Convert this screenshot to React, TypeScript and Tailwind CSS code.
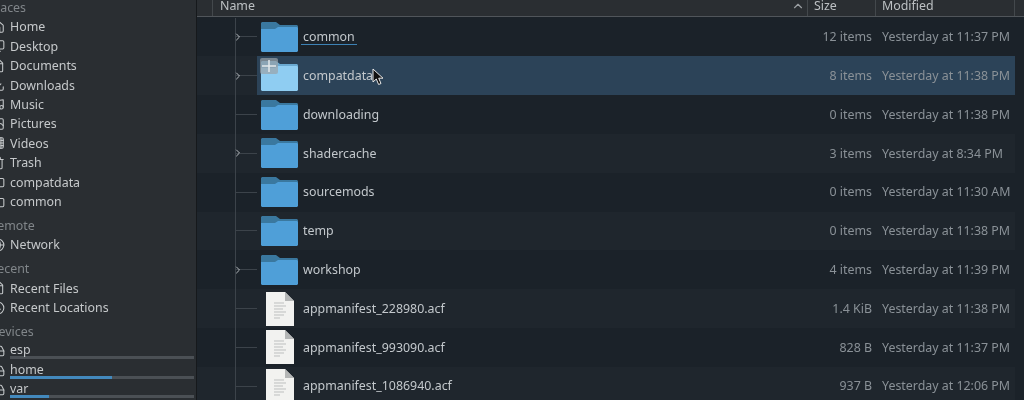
import React from 'react';
import { ChevronRight, ChevronUp, Clock, Download, File, FileClock, Film, Folder, Globe, HardDrive, Home, Image, Monitor, Music, Trash2 } from 'lucide-react';
import type { LucideIcon } from 'lucide-react';

type Place = { label: string; icon: LucideIcon; usage?: number };

const sections: { title: string; items: Place[] }[] = [
    {
        title: 'Places',
        items: [
            { label: 'Home', icon: Home },
            { label: 'Desktop', icon: Monitor },
            { label: 'Documents', icon: File },
            { label: 'Downloads', icon: Download },
            { label: 'Music', icon: Music },
            { label: 'Pictures', icon: Image },
            { label: 'Videos', icon: Film },
            { label: 'Trash', icon: Trash2 },
            { label: 'compatdata', icon: Folder },
            { label: 'common', icon: Folder },
        ],
    },
    { title: 'Remote', items: [{ label: 'Network', icon: Globe }] },
    {
        title: 'Recent',
        items: [
            { label: 'Recent Files', icon: FileClock },
            { label: 'Recent Locations', icon: Clock },
        ],
    },
    {
        title: 'Devices',
        items: [
            { label: 'esp', icon: HardDrive, usage: 0 },
            { label: 'home', icon: HardDrive, usage: 55.5 },
            { label: 'var', icon: HardDrive, usage: 21 },
        ],
    },
];

type Entry = { name: string; size: string; modified: string; kind: 'folder' | 'file'; expandable?: boolean };

const entries: Entry[] = [
    { name: 'common', size: '12 items', modified: 'Yesterday at 11:37 PM', kind: 'folder', expandable: true },
    { name: 'compatdata', size: '8 items', modified: 'Yesterday at 11:38 PM', kind: 'folder', expandable: true },
    { name: 'downloading', size: '0 items', modified: 'Yesterday at 11:38 PM', kind: 'folder' },
    { name: 'shadercache', size: '3 items', modified: 'Yesterday at 8:34 PM', kind: 'folder', expandable: true },
    { name: 'sourcemods', size: '0 items', modified: 'Yesterday at 11:30 AM', kind: 'folder' },
    { name: 'temp', size: '0 items', modified: 'Yesterday at 11:38 PM', kind: 'folder' },
    { name: 'workshop', size: '4 items', modified: 'Yesterday at 11:39 PM', kind: 'folder', expandable: true },
    { name: 'appmanifest_228980.acf', size: '1.4 KiB', modified: 'Yesterday at 11:38 PM', kind: 'file' },
    { name: 'appmanifest_993090.acf', size: '828 B', modified: 'Yesterday at 11:37 PM', kind: 'file' },
    { name: 'appmanifest_1086940.acf', size: '937 B', modified: 'Yesterday at 12:06 PM', kind: 'file' },
];

const FolderIcon = ({ light }: { light?: boolean }) => (
    <svg width="37" height="30" viewBox="0 0 37 30" className="shrink-0">
        <path d="M0 1.500C0 .7.7 0 1.500 0H15l4 3h16.500c.8 0 1.500.7 1.500 1.500V12H0z" fill={light ? '#6aa9d1' : '#3a789f'} />
        <path d="M0 7h14l3-2h18.500c.8 0 1.500.7 1.500 1.500V28.500c0 .8-.7 1.500-1.500 1.500H1.500C.7 30 0 29.300 0 28.500z" fill={light ? '#8fcdf2' : '#4f9fd8'} />
    </svg>
);

const FileIcon = () => (
    <svg width="28" height="34" viewBox="0 0 28 34" className="shrink-0">
        <path d="M0 0h19l9 9v25H0z" fill="#f2f2f0" />
        <path d="M19 0l9 9h-9z" fill="#b4b6b6" />
        <path d="M8 11h10M8 14h12M8 17h9M8 20h12M8 23h10M8 26h6" stroke="#bdbfbf" strokeWidth="1" />
    </svg>
);

const Cursor = () => (
    <svg width="13" height="18" viewBox="0 0 13 18" className="absolute left-[372px] top-[68px]">
        <path d="M1 1v13l3.300-3 2.300 5.500 2.400-1-2.300-5.300H11z" fill="#111" stroke="#e8e8e8" strokeWidth="1" />
    </svg>
);

const Sidebar = () => (
    <aside className="w-[197px] h-[400px] shrink-0 overflow-hidden bg-[#2a2e32] border-r border-[#16191c] pr-[2px] flex flex-col gap-[4.600px]">
        {sections.map((section) => (
            <div key={section.title} className="first:-mt-[2px]">
                <div className="h-[19.400px] leading-[19.400px] -ml-[10.500px] text-[#81868a] whitespace-nowrap">{section.title}</div>
                {section.items.map(({ label, icon: Icon, usage }) => (
                    <div key={label} className="h-[19.400px] flex items-center whitespace-nowrap text-[#c6c9cb]">
                        <Icon size={14} strokeWidth={1.800} className="-ml-[9px] mr-[5px] shrink-0" />
                        <div className="flex-1 min-w-0">
                            <div className={usage === undefined ? 'leading-[19.400px]' : 'leading-[13px]'}>{label}</div>
                            {usage !== undefined && (
                                <div className="h-[3px] bg-[#4b5055]">
                                    <div className="h-full bg-[#4389bd]" style={{ width: `${usage}%` }} />
                                </div>
                            )}
                        </div>
                    </div>
                ))}
            </div>
        ))}
    </aside>
);

const FileRow = ({ entry, index }: { entry: Entry; index: number }) => {
    const hovered = entry.name === 'compatdata';
    return (
        <div className={`h-[38.800px] flex items-center shrink-0 ${index % 2 === 1 ? 'bg-[#1f262d]' : ''}`}>
            <div className="w-[38px] h-full shrink-0" />
            <div className="w-[22px] h-full shrink-0 relative border-l border-[#3c434a] flex items-center">
                <div className="w-full h-px bg-[#3c434a]" />
                {entry.expandable && <ChevronRight size={12} strokeWidth={2} className="absolute -left-[4px] text-[#b6bbbf]" />}
            </div>
            <div className={`flex-1 h-full flex items-center ${hovered ? 'bg-[#2c4358]' : ''}`}>
                <div className="w-[46px] h-full shrink-0 flex items-center justify-center pl-[2px] pr-[3px]">
                    {entry.kind === 'folder' ? <FolderIcon light={hovered} /> : <FileIcon />}
                </div>
                <div className="flex-1 min-w-0 pt-[1px]">
                    <span className={`inline-block leading-[14px] -mx-[2px] px-[2px] text-[#c3c8cc] ${entry.name === 'common' ? 'border-b border-[#3d82b5] -mb-[1px]' : ''}`}>{entry.name}</span>
                </div>
                <div className="w-[70px] pr-[4px] pt-[1px] text-right text-[#8a9197] whitespace-nowrap">{entry.size}</div>
                <div className="w-[139px] pl-[6px] pt-[1px] text-[#8a9197] whitespace-nowrap">{entry.modified}</div>
            </div>
        </div>
    );
};

export default function App() {
    return (
        <div className="relative w-[1024px] h-[400px] overflow-hidden flex bg-[#1b2229] text-[12.400px] blur-[0.4px] font-['Noto_Sans',sans-serif]">
            <Sidebar />
            <main className="flex-1 min-w-0 flex flex-col">
                <header className="h-[17px] shrink-0 flex items-center bg-[#2a2e32] border-b border-[#50555a] text-[#bcc0c3] leading-[12px]">
                    <div className="w-[16px] h-full border-r border-[#43484c]" />
                    <div className="w-[595px] h-full pl-[7px] pb-[5px] flex items-center justify-between border-r border-[#43484c]">
                        <span>Name</span>
                        <ChevronUp size={14} className="mr-[2px] text-[#9a9fa3]" />
                    </div>
                    <div className="w-[68px] h-full pl-[6px] pb-[5px] border-r border-[#43484c] flex items-center">Size</div>
                    <div className="w-[139px] h-full pl-[6px] pb-[5px] border-r border-[#43484c] flex items-center">Modified</div>
                </header>
                <div className="pr-[9px] flex flex-col pt-[0.600px]">
                    {entries.map((entry, index) => (
                        <FileRow key={entry.name} entry={entry} index={index} />
                    ))}
                </div>
            </main>
            <svg width="18" height="16" viewBox="0 0 18 16" className="absolute left-[260px] top-[58px]">
                <rect width="18" height="16" rx="2" fill="#9aa3a8" fillOpacity="0.7" />
                <path d="M9 2v12M2 8h14" stroke="#e4e8ea" strokeWidth="1.500" />
            </svg>
            <Cursor />
        </div>
    );
}
